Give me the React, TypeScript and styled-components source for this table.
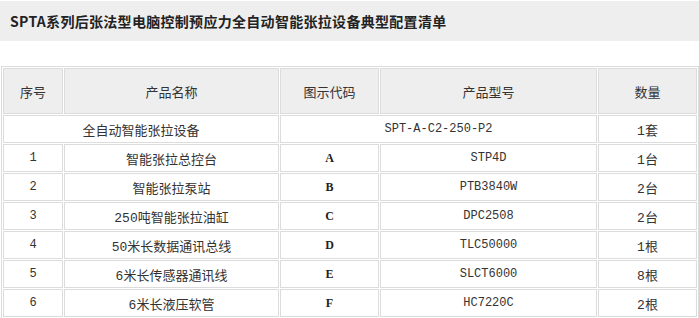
import styled, { createGlobalStyle } from 'styled-components';

const GlobalStyle = createGlobalStyle`
  html, body {
    margin: 0;
    padding: 0;
    background: #fff;
  }
  body {
    font-family: "Liberation Mono", "Noto Sans CJK SC", monospace;
    color: #333;
  }
`;

type Item = {
  no: string;
  name: string;
  code: string;
  model: string;
  qty: string;
};

const items: Item[] = [
  { no: '1', name: '智能张拉总控台', code: 'A', model: 'STP4D', qty: '1台' },
  { no: '2', name: '智能张拉泵站', code: 'B', model: 'PTB3840W', qty: '2台' },
  { no: '3', name: '250吨智能张拉油缸', code: 'C', model: 'DPC2508', qty: '2台' },
  { no: '4', name: '50米长数据通讯总线', code: 'D', model: 'TLC50000', qty: '1根' },
  { no: '5', name: '6米长传感器通讯线', code: 'E', model: 'SLCT6000', qty: '8根' },
  { no: '6', name: '6米长液压软管', code: 'F', model: 'HC7220C', qty: '2根' },
];

const App = () => {
  return (
    <>
      <GlobalStyle />
      <Page>
        <TitleBar>
          <Title>SPTA系列后张法型电脑控制预应力全自动智能张拉设备典型配置清单</Title>
        </TitleBar>
        <Table>
          <colgroup>
            <col style={{ width: 60 }} />
            <col style={{ width: 215 }} />
            <col style={{ width: 99 }} />
            <col style={{ width: 217 }} />
            <col style={{ width: 99 }} />
          </colgroup>
          <thead>
            <tr>
              <HeadCell>序号</HeadCell>
              <HeadCell>产品名称</HeadCell>
              <HeadCell>图示代码</HeadCell>
              <HeadCell>产品型号</HeadCell>
              <HeadCell>数量</HeadCell>
            </tr>
          </thead>
          <tbody>
            <tr>
              <Cell colSpan={2}>全自动智能张拉设备</Cell>
              <Cell colSpan={2} $mono>SPT-A-C2-250-P2</Cell>
              <Cell>1套</Cell>
            </tr>
            {items.map((item) => (
              <tr key={item.no}>
                <Cell $mono>{item.no}</Cell>
                <Cell>{item.name}</Cell>
                <Cell>
                  <Code>{item.code}</Code>
                </Cell>
                <Cell $mono>{item.model}</Cell>
                <Cell>{item.qty}</Cell>
              </tr>
            ))}
          </tbody>
        </Table>
      </Page>
    </>
  );
};

export default App;

const Page = styled.div`
  width: 699px;
  padding-top: 1px;
`;

const TitleBar = styled.div`
  height: 40px;
  background: #eeeeee;
  display: flex;
  align-items: center;
  padding-left: 10px;
`;

const Title = styled.h1`
  margin: 0;
  font-family: "Noto Sans CJK SC", sans-serif;
  font-size: 14px;
  font-weight: 700;
  color: #222;
  letter-spacing: 0.3px;
`;

const Table = styled.table`
  margin: 25px 0 0 1px;
  width: 698px;
  table-layout: fixed;
  border-collapse: separate;
  border-spacing: 1px;
  border: 1px solid #dcdcdc;
`;

const HeadCell = styled.th`
  height: 44px;
  padding: 0;
  border: 1px solid #dcdcdc;
  background: #eeeeee;
  font-family: "Noto Sans CJK SC", sans-serif;
  font-size: 13px;
  font-weight: 400;
  color: #333;
  text-align: center;
`;

const Cell = styled.td<{ $mono?: boolean }>`
  height: 26px;
  padding: 0;
  border: 1px solid #dcdcdc;
  text-align: center;
  font-size: ${(p) => (p.$mono ? '12px' : '13px')};
  font-family: "Liberation Mono", "Noto Sans CJK SC", monospace;
  color: #333;
  white-space: nowrap;
`;

const Code = styled.b`
  font-family: "Liberation Serif", serif;
  font-size: 12px;
  font-weight: 700;
  color: #222;
`;
